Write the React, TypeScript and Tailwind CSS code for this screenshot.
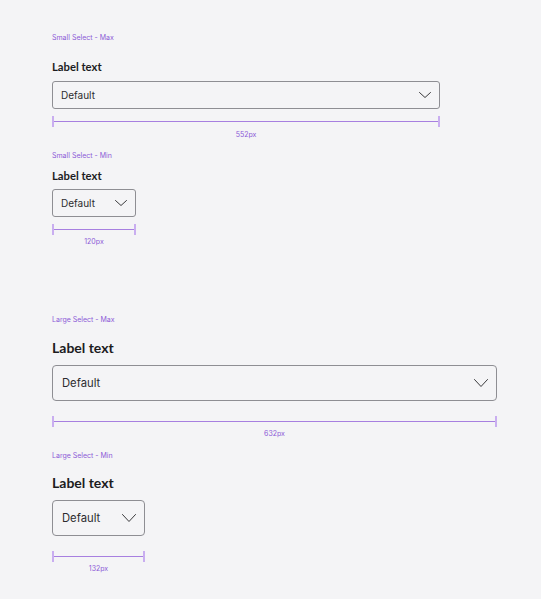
import React from "react";

type Size = "sm" | "lg";

function Chevron({ size }: { size: Size }) {
  const w = size === "sm" ? 12 : 14;
  const h = size === "sm" ? 6 : 8;
  return (
    <svg width={w} height={h} viewBox={`0 0 ${w} ${h}`} fill="none">
      <path
        d={`M0.5 0.5 L${w / 2} ${h - 0.5} L${w - 0.5} 0.5`}
        stroke="#3a3a3c"
        strokeWidth="1"
        strokeLinecap="round"
        strokeLinejoin="round"
      />
    </svg>
  );
}

function Measure({
  width,
  label,
  line,
  textGap,
}: {
  width: number;
  label: string;
  line: string;
  textGap: string;
}) {
  return (
    <div style={{ width }} className="flex flex-col">
      <div className={`relative flex h-[11px] items-center ${line}`}>
        <div className="h-[11px] w-[2px] bg-[#c9aef0]" />
        <div className="h-[1.5px] flex-1 bg-[#a77fe0]" />
        <div className="h-[11px] w-[2px] bg-[#c9aef0]" />
      </div>
      <div className={`${textGap} text-center text-[7px] leading-[9px] text-[#8c5ad6]`}>{label}</div>
    </div>
  );
}

function SelectSpec({
  title,
  size,
  width,
  px,
  labelGap,
  selectGap,
  lineGap,
  textGap,
  className,
}: {
  title: string;
  size: Size;
  width: number;
  px: string;
  labelGap: string;
  selectGap: string;
  lineGap: string;
  textGap: string;
  className?: string;
}) {
  const sm = size === "sm";
  return (
    <section className={`flex flex-col ${className ?? ""}`}>
      <div className="text-[7px] leading-[9px] text-[#8c5ad6]">{title}</div>
      <div
        className={`${labelGap} font-['Lato'] font-bold text-[#1c1c1e] ${
          sm ? "text-[11.25px] leading-[14px]" : "text-[14px] leading-[18px]"
        }`}
      >
        Label text
      </div>
      <div
        style={{ width }}
        className={`${selectGap} ${
          sm
            ? "flex h-[28px] items-center justify-between rounded-[3px] border border-[#8e8e93] pl-[8px] pr-[8px] text-[10px] text-[#2c2c2e]"
            : "flex h-[36px] items-center justify-between rounded-[4px] border border-[#8e8e93] pl-[9px] pr-[8px] text-[11.25px] text-[#2c2c2e]"
        }`}
      >
        <span>Default</span>
        <Chevron size={size} />
      </div>
      <Measure width={width} label={px} line={lineGap} textGap={textGap} />
    </section>
  );
}

export default function App() {
  return (
    <div className="min-h-[599px] w-full bg-[#f4f4f6] pl-[52px] pt-[33px] font-['Inter',sans-serif]">
      <SelectSpec
        title="Small Select - Max"
        size="sm"
        width={388}
        px="552px"
        labelGap="mt-[18px]"
        selectGap="mt-[7px]"
        lineGap="mt-[7px]"
        textGap="mt-[3px]"
      />
      <SelectSpec
        title="Small Select - Min"
        size="sm"
        width={84}
        px="120px"
        labelGap="mt-[9px]"
        selectGap="mt-[6px]"
        lineGap="mt-[7px]"
        textGap="mt-[2px]"
        className="mt-[12px]"
      />
      <SelectSpec
        title="Large Select - Max"
        size="lg"
        width={445}
        px="632px"
        labelGap="mt-[15px]"
        selectGap="mt-[8px]"
        lineGap="mt-[15px]"
        textGap="mt-[2px]"
        className="mt-[69px]"
      />
      <SelectSpec
        title="Large Select - Min"
        size="lg"
        width={93}
        px="132px"
        labelGap="mt-[14px]"
        selectGap="mt-[8px]"
        lineGap="mt-[15px]"
        textGap="mt-[2px]"
        className="mt-[13px]"
      />
    </div>
  );
}
